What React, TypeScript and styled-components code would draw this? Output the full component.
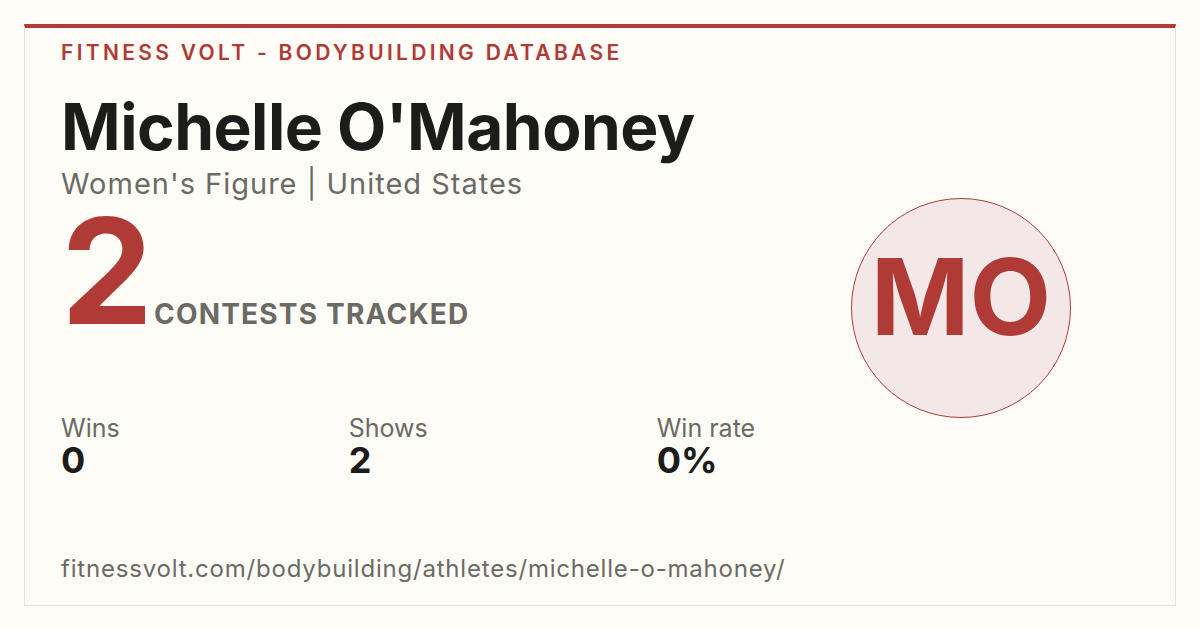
import styled, { createGlobalStyle } from 'styled-components';

const RED = '#b03a35';
const INK = '#1c1c1b';
const MUTED = '#6b6a64';

const GlobalStyle = createGlobalStyle`
  html, body {
    margin: 0;
    padding: 0;
    background: #fdfcf7;
  }
  body {
    font-family: Inter, 'Noto Sans', sans-serif;
  }
`;

interface IStat {
  label: string;
  value: string;
}

const stats: IStat[] = [
  { label: 'Wins', value: '0' },
  { label: 'Shows', value: '2' },
  { label: 'Win rate', value: '0%' },
];

function App() {
  return (
    <>
      <GlobalStyle />
      <Page>
        <Card>
          <Main>
            <Kicker>FITNESS VOLT - BODYBUILDING DATABASE</Kicker>
            <Name>Michelle O'Mahoney</Name>
            <Division>Women's Figure | United States</Division>
            <CountRow>
              <Count>2</Count>
              <CountLabel>CONTESTS TRACKED</CountLabel>
            </CountRow>
            <Stats>
              {stats.map((s) => (
                <Stat key={s.label}>
                  <StatLabel>{s.label}</StatLabel>
                  <StatValue>{s.value}</StatValue>
                </Stat>
              ))}
            </Stats>
            <Url>fitnessvolt.com/bodybuilding/athletes/michelle-o-mahoney/</Url>
          </Main>
          <AvatarColumn>
            <Avatar>MO</Avatar>
          </AvatarColumn>
        </Card>
      </Page>
    </>
  );
}

export default App;

const Page = styled.div`
  width: 1200px;
  height: 630px;
  padding: 24px;
  box-sizing: border-box;
`;

const Card = styled.div`
  display: flex;
  height: 582px;
  box-sizing: border-box;
  border: 1px solid #e6e3dc;
  border-top: 4px solid ${RED};
  padding: 0 36px;
`;

const Main = styled.div`
  display: flex;
  flex-direction: column;
  flex: 1;
  min-width: 0;
  padding-top: 13px;
`;

const Kicker = styled.div`
  color: ${RED};
  font-size: 21px;
  font-weight: 600;
  letter-spacing: 3.3px;
  line-height: 24px;
`;

const Name = styled.h1`
  margin: 26px 0 0;
  color: ${INK};
  font-size: 64px;
  font-weight: 700;
  letter-spacing: -0.5px;
  line-height: 72px;
`;

const Division = styled.div`
  margin-top: 4px;
  color: ${MUTED};
  font-size: 29px;
  letter-spacing: 1px;
  line-height: 34px;
`;

const CountRow = styled.div`
  display: flex;
  align-items: baseline;
  gap: 5px;
  margin-top: 10px;
`;

const Count = styled.div`
  color: ${RED};
  font-size: 146px;
  font-weight: 700;
  line-height: 120px;
  letter-spacing: -4px;
`;

const CountLabel = styled.div`
  color: ${MUTED};
  font-size: 28px;
  font-weight: 700;
  letter-spacing: 1.2px;
`;

const Stats = styled.div`
  display: flex;
  gap: 229px;
  margin-top: 83px;
`;

const Stat = styled.div`
  display: flex;
  flex-direction: column;
`;

const StatLabel = styled.div`
  color: ${MUTED};
  font-size: 25px;
  line-height: 28px;
`;

const StatValue = styled.div`
  color: ${INK};
  font-size: 36px;
  font-weight: 700;
  line-height: 36px;
`;

const Url = styled.div`
  margin-top: auto;
  margin-bottom: 22px;
  color: ${MUTED};
  font-size: 24px;
  letter-spacing: 0.8px;
  line-height: 28px;
  white-space: nowrap;
`;

const AvatarColumn = styled.div`
  display: flex;
  align-items: center;
  justify-content: center;
  width: 356px;
  padding-bottom: 18px;
`;

const Avatar = styled.div`
  display: flex;
  align-items: center;
  justify-content: center;
  width: 220px;
  height: 220px;
  padding-bottom: 22px;
  border-radius: 50%;
  border: 1px solid ${RED};
  background: #f3e8e7;
  color: ${RED};
  font-size: 106px;
  font-weight: 700;
  box-sizing: border-box;
`;
